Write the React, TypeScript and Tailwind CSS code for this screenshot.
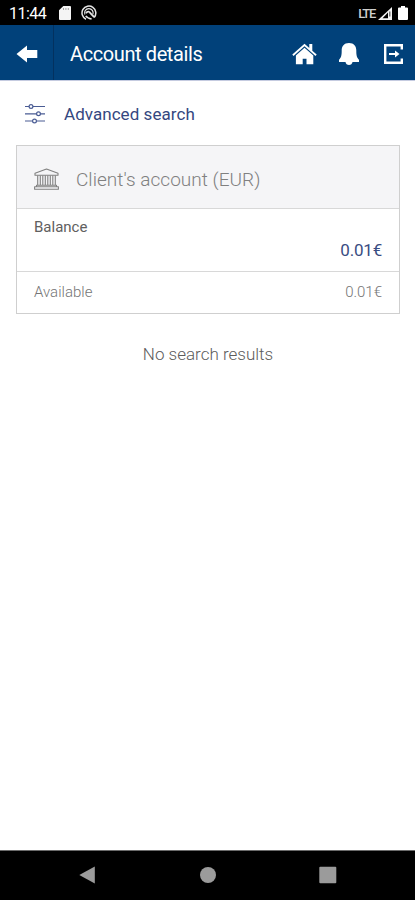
import type { ReactNode } from 'react'

function StatusBar() {
  return (
    <div className="h-[25px] shrink-0 bg-black text-white flex items-center pl-[9px] pr-[7px] pt-[2px]">
      <span className="w-[50px] text-[16px] leading-none tracking-[-0.5px]">11:44</span>
      {/* SD card */}
      <svg className="-mt-px" width="12" height="14" viewBox="0 0 12 14" fill="#f4f4f4">
        <path d="M4.3 0H11a1 1 0 0 1 1 1v12a1 1 0 0 1-1 1H1a1 1 0 0 1-1-1V4.3z" />
        <path d="M4.5 2v2M6.9 2v2M9.3 2v2" stroke="#999" strokeWidth="0.9" />
      </svg>
      <svg className="ml-[10px] -mt-px" width="16" height="16" viewBox="0 0 16 16" fill="none" stroke="#e6e6e6">
        <path d="M5 14.2A6.900 6.900 0 1 1 13.2 12.4" strokeWidth="1.5" />
        <path d="M3.900 9.500A4.300 4.300 0 1 1 11.900 9.300" strokeWidth="1.2" />
        <path d="M5 8.200C6.500 5.800 8.500 6.300 9.500 8.300L13.200 12.200" strokeWidth="1.900" />
        <path d="M4.800 10.800c1 1.600 3.200 2.600 5.800 3.200" strokeWidth="1.600" />
      </svg>
      <span className="ml-auto -mt-px text-[13px] leading-none font-medium tracking-[-1.300px] text-[#cfcfcf]">LTE</span>
      <svg className="ml-[3px] -mt-px" width="14" height="13" viewBox="0 0 14 13">
        <path d="M14 0v13H0z" fill="#f4f4f4" />
        <path d="M10 5.500v5.800H4.500z" fill="#000" />
        <path d="M11 4.500h1.500v5H11z" fill="#777" />
      </svg>
      <svg className="ml-[6px] -mt-px" width="10" height="14" viewBox="0 0 10 14" fill="#fff">
        <path d="M3 0h4v1.500h2a1 1 0 0 1 1 1V13a1 1 0 0 1-1 1H1a1 1 0 0 1-1-1V2.500a1 1 0 0 1 1-1h2z" />
      </svg>
    </div>
  )
}

function Header() {
  return (
    <header className="h-[55px] shrink-0 bg-[#01417a] text-white flex items-center pr-[12px]">
      <button aria-label="Back" className="w-[54px] h-full pt-[3px] border-r border-[#03315f] flex items-center pl-[16px]">
        <svg width="22" height="18" viewBox="0 0 22 18" fill="#fff">
          <path d="M0.500 9 11 0.500V5h10.300v8H11v4.500z" />
        </svg>
      </button>
      <h1 className="pl-[16px] pt-[2px] text-[20px] leading-none tracking-[-0.400px]">Account details</h1>
      <div className="ml-auto pt-[2px] flex items-center">
        <svg width="25" height="22" viewBox="0 0 25 22" fill="#fff">
          <path d="M12.500 0.800 17.300 5V1h3v6.700L24.700 11.600l-1.200 1.400L12.500 3.300 1.500 13 .3 11.600z" />
          <path d="M12.500 4.700 21.300 12.500V21.200h-6.800V15.800h-3.800v5.400H3.900V12.500z" />
        </svg>
        <svg className="ml-[22px]" width="20" height="22" viewBox="0 0 20 22" fill="#fff">
          <path d="M10 0C5 0 2.700 3.300 2.700 7.500c0 5-.5 7-2.700 9.200V19h20v-2.300c-2.200-2.200-2.700-4.200-2.700-9.200C17.300 3.300 15 0 10 0z" />
          <path d="M6.500 19h7c-.3 1.900-1.600 3-3.500 3s-3.200-1.100-3.500-3z" />
        </svg>
        <svg className="ml-[25px]" width="19" height="20" viewBox="0 0 19 20" fill="none" stroke="#fff" strokeWidth="2.400">
          <path d="M17.800 5.500V1.200H1.200v17.600h16.600V14.500" />
          <path d="M5 10h8" strokeWidth="2" />
          <path d="M11 6.500 15.500 10 11 13.500z" fill="#fff" stroke="none" />
        </svg>
      </div>
    </header>
  )
}

function SlidersIcon() {
  return (
    <svg width="20" height="20" viewBox="0 0 20 20" fill="#fff" stroke="#4a5c94" strokeWidth="1.200">
      <path d="M0 2.500h20M0 9.800h20M0 17h20" />
      <circle cx="6" cy="2.500" r="1.900" />
      <circle cx="13.500" cy="9.800" r="1.900" />
      <circle cx="9.500" cy="17" r="1.900" />
    </svg>
  )
}

function BankIcon() {
  return (
    <svg width="25" height="22" viewBox="0 0 25 22" fill="none" stroke="#808080" strokeWidth="1.100" strokeLinejoin="round">
      <path d="M12.500 1 24 5.200v2H1v-2z" />
      <path d="M3.700 7.500v9.500M6.300 7.500v9.500M8.800 7.500v9.500M11.300 7.500v9.500M13.800 7.500v9.500M16.300 7.500v9.500M18.800 7.500v9.500M21.300 7.500v9.500" />
      <path d="M2.500 17.200h20v1.600h-20zM0.600 18.800h23.800v2.400H.6z" />
    </svg>
  )
}

function NavButton({ label, children }: { label: string; children: ReactNode }) {
  return (
    <button aria-label={label} className="w-[120px] flex justify-center">
      <svg width="18" height="18" viewBox="0 0 18 18" fill="#9b9b9b">
        {children}
      </svg>
    </button>
  )
}

export default function App() {
  return (
    <div className="w-[415px] h-[900px] flex flex-col bg-white font-[Roboto,sans-serif] overflow-hidden">
      <StatusBar />
      <Header />

      <main className="flex-1 border-t border-[#c5cbe0] pl-[16px] pr-[15px]">
        <button className="mt-[22px] ml-[9px] h-[22px] flex items-center text-[#34477f]">
          <SlidersIcon />
          <span className="ml-[19px] text-[17px] leading-none tracking-[0.050px]">Advanced search</span>
        </button>

        <section className="mt-[20px] h-[169px] flex flex-col border border-[#cfcfcf]">
          <div className="h-[63px] flex items-center pl-[17px] pt-[4px] bg-[#f5f5f7] border-b border-[#d8d8d8]">
            <BankIcon />
            <h2 className="ml-[17px] text-[19px] leading-none font-light text-[#808080] tracking-[0.030px]">Client's account (EUR)</h2>
          </div>
          <div className="h-[63px] flex flex-col justify-between px-[17px] pt-[11px] pb-[12px] border-b border-[#d8d8d8]">
            <span className="text-[15px] leading-none text-[#606060]">Balance</span>
            <span className="self-end text-[17px] leading-none tracking-[-0.200px] text-[#3a4d82]">0.01€</span>
          </div>
          <div className="flex-1 flex items-center justify-between px-[17px] text-[15px] leading-none font-light text-[#757575]">
            <span>Available</span>
            <span>0.01€</span>
          </div>
        </section>

        <p className="mt-[32px] text-center text-[17px] leading-none font-light text-[#5c5c5c]">No search results</p>
      </main>

      <nav className="h-[50px] shrink-0 bg-black border-t border-[#6b6b6b] flex items-center justify-center pb-[2px]">
        <NavButton label="Back">
          <path d="M0.300 9 15.800 0.500v17z" />
        </NavButton>
        <NavButton label="Home">
          <circle cx="9" cy="9" r="8" />
        </NavButton>
        <NavButton label="Recent apps">
          <rect x="0.300" y="0.800" width="17" height="16.500" rx="1" />
        </NavButton>
      </nav>
    </div>
  )
}
